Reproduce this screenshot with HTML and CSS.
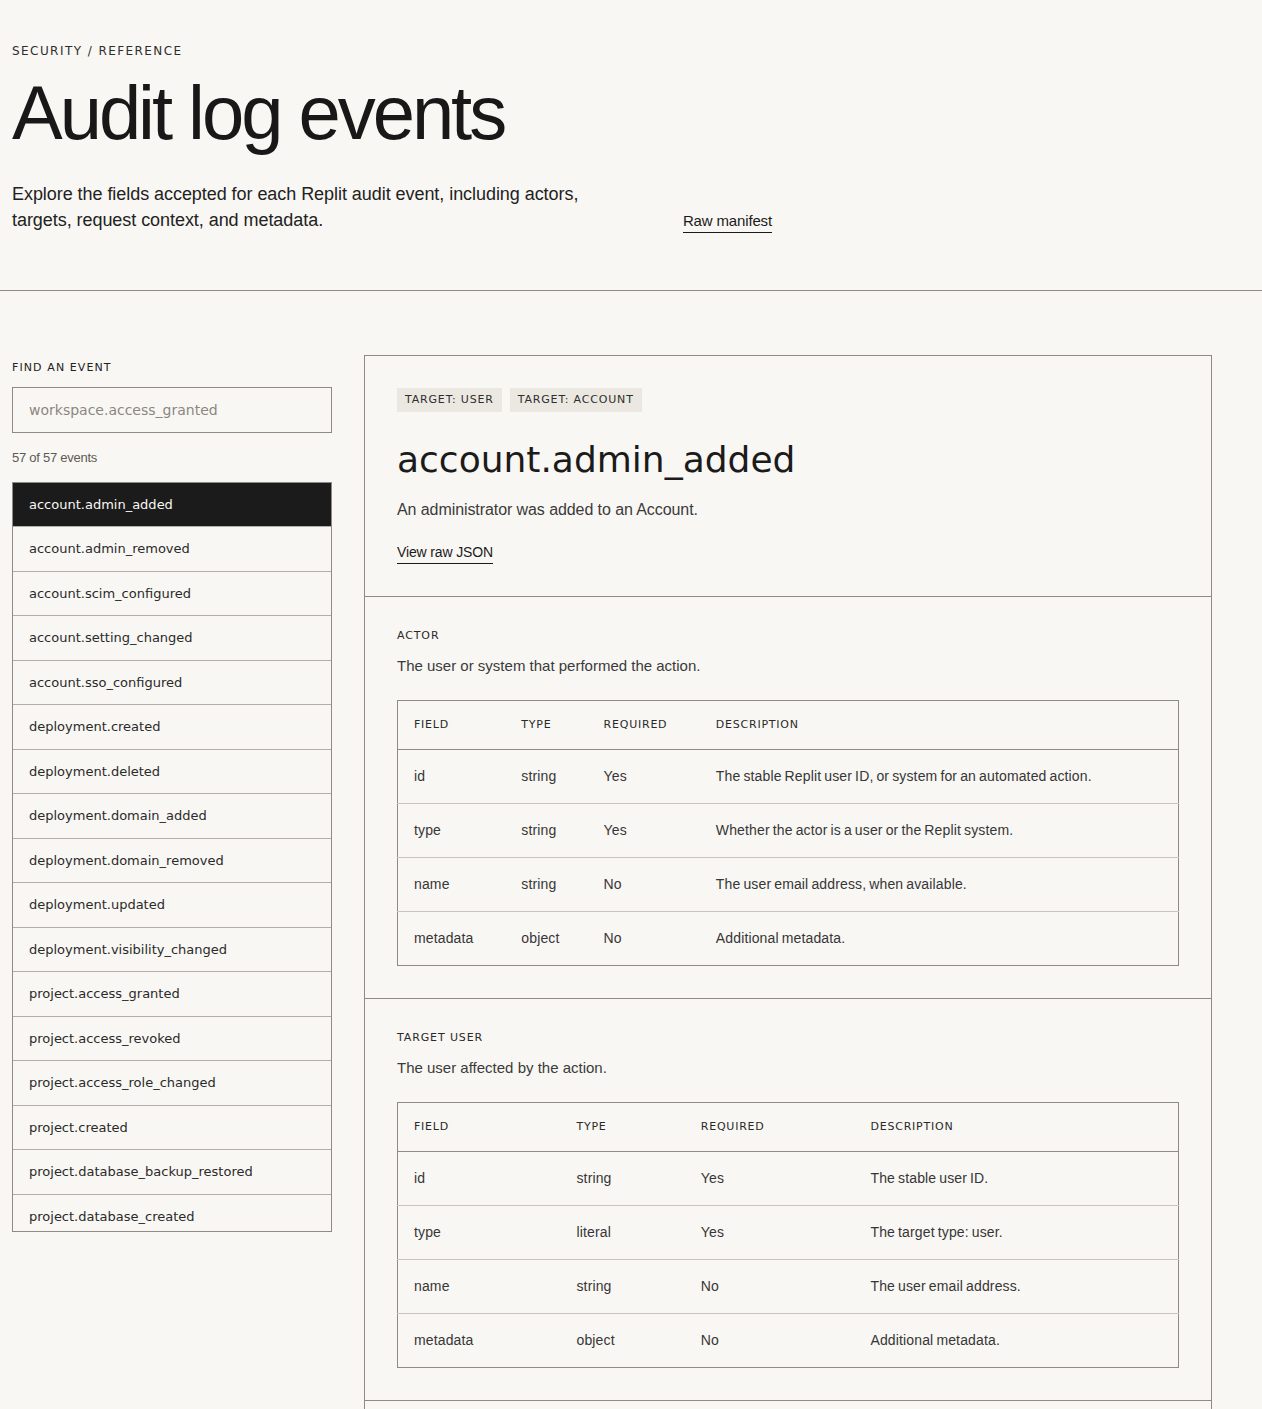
FILE: index.html
```html
<!DOCTYPE html>
<html lang="en">
<head>
<meta charset="utf-8">
<title>Audit log events</title>
<link rel="stylesheet" href="styles.css">
</head>
<body>
<header class="page-head">
  <div class="page-head-inner">
    <p class="eyebrow">Security / Reference</p>
    <h1 class="page-title">Audit log events</h1>
    <div class="intro">
      <p class="intro-text">Explore the fields accepted for each Replit audit event, including actors, targets, request context, and metadata.</p>
      <a class="text-link intro-link" href="#manifest">Raw manifest</a>
    </div>
  </div>
</header>

<main class="layout">
  <aside class="sidebar">
    <label class="field-label" for="event-search">Find an event</label>
    <input class="search" id="event-search" type="text" placeholder="workspace.access_granted">
    <p class="count">57 of 57 events</p>
    <ul class="event-list">
      <li class="event is-active">account.admin_added</li>
      <li class="event">account.admin_removed</li>
      <li class="event">account.scim_configured</li>
      <li class="event">account.setting_changed</li>
      <li class="event">account.sso_configured</li>
      <li class="event">deployment.created</li>
      <li class="event">deployment.deleted</li>
      <li class="event">deployment.domain_added</li>
      <li class="event">deployment.domain_removed</li>
      <li class="event">deployment.updated</li>
      <li class="event">deployment.visibility_changed</li>
      <li class="event">project.access_granted</li>
      <li class="event">project.access_revoked</li>
      <li class="event">project.access_role_changed</li>
      <li class="event">project.created</li>
      <li class="event">project.database_backup_restored</li>
      <li class="event">project.database_created</li>
      <li class="event">project.database_deleted</li>
      <li class="event">project.deleted</li>
      <li class="event">project.exported</li>
      <li class="event">project.forked</li>
      <li class="event">project.imported</li>
      <li class="event">project.renamed</li>
      <li class="event">project.secret_created</li>
      <li class="event">project.secret_deleted</li>
      <li class="event">project.secret_updated</li>
      <li class="event">project.transferred</li>
      <li class="event">project.visibility_changed</li>
      <li class="event">team.created</li>
      <li class="event">team.deleted</li>
      <li class="event">team.member_added</li>
      <li class="event">team.member_removed</li>
      <li class="event">team.member_role_changed</li>
      <li class="event">team.renamed</li>
      <li class="event">user.api_token_created</li>
      <li class="event">user.api_token_revoked</li>
      <li class="event">user.deactivated</li>
      <li class="event">user.invited</li>
      <li class="event">user.login</li>
      <li class="event">user.login_failed</li>
      <li class="event">user.logout</li>
      <li class="event">user.mfa_disabled</li>
      <li class="event">user.mfa_enabled</li>
      <li class="event">user.password_changed</li>
      <li class="event">user.reactivated</li>
      <li class="event">user.role_changed</li>
      <li class="event">user.ssh_key_added</li>
      <li class="event">user.ssh_key_removed</li>
      <li class="event">workspace.access_granted</li>
      <li class="event">workspace.access_revoked</li>
      <li class="event">workspace.billing_updated</li>
      <li class="event">workspace.created</li>
      <li class="event">workspace.deleted</li>
      <li class="event">workspace.invite_sent</li>
      <li class="event">workspace.member_added</li>
      <li class="event">workspace.member_removed</li>
      <li class="event">workspace.setting_changed</li>
    </ul>
  </aside>

  <article class="detail">
    <section class="detail-head">
      <div class="tags">
        <span class="tag">Target: user</span>
        <span class="tag">Target: account</span>
      </div>
      <h2 class="event-name">account.admin_added</h2>
      <p class="event-desc">An administrator was added to an Account.</p>
      <a class="text-link json-link" href="#json">View raw JSON</a>
    </section>

    <section class="block">
      <h3 class="block-label">Actor</h3>
      <p class="block-desc">The user or system that performed the action.</p>
      <table class="fields">
        <thead>
          <tr><th>Field</th><th>Type</th><th>Required</th><th>Description</th></tr>
        </thead>
        <tbody>
          <tr><td>id</td><td>string</td><td>Yes</td><td>The stable Replit user ID, or system for an automated action.</td></tr>
          <tr><td>type</td><td>string</td><td>Yes</td><td>Whether the actor is a user or the Replit system.</td></tr>
          <tr><td>name</td><td>string</td><td>No</td><td>The user email address, when available.</td></tr>
          <tr><td>metadata</td><td>object</td><td>No</td><td>Additional metadata.</td></tr>
        </tbody>
      </table>
    </section>

    <section class="block">
      <h3 class="block-label">Target user</h3>
      <p class="block-desc">The user affected by the action.</p>
      <table class="fields">
        <thead>
          <tr><th>Field</th><th>Type</th><th>Required</th><th>Description</th></tr>
        </thead>
        <tbody>
          <tr><td>id</td><td>string</td><td>Yes</td><td>The stable user ID.</td></tr>
          <tr><td>type</td><td>literal</td><td>Yes</td><td>The target type: user.</td></tr>
          <tr><td>name</td><td>string</td><td>No</td><td>The user email address.</td></tr>
          <tr><td>metadata</td><td>object</td><td>No</td><td>Additional metadata.</td></tr>
        </tbody>
      </table>
    </section>

    <section class="block">
      <h3 class="block-label">Target account</h3>
      <p class="block-desc">The account the administrator was added to.</p>
      <table class="fields">
        <thead>
          <tr><th>Field</th><th>Type</th><th>Required</th><th>Description</th></tr>
        </thead>
        <tbody>
          <tr><td>id</td><td>string</td><td>Yes</td><td>The stable account ID.</td></tr>
          <tr><td>type</td><td>literal</td><td>Yes</td><td>The target type: account.</td></tr>
          <tr><td>name</td><td>string</td><td>No</td><td>The account name.</td></tr>
          <tr><td>metadata</td><td>object</td><td>No</td><td>Additional metadata.</td></tr>
        </tbody>
      </table>
    </section>
  </article>
</main>
</body>
</html>
```

FILE: styles.css
```css
* {
  box-sizing: border-box;
}

html,
body {
  margin: 0;
  padding: 0;
}

body {
  background: #f9f7f3;
  color: #1b1b1b;
  font-family: "Liberation Sans", Arial, sans-serif;
}

p,
h1,
h2,
h3,
ul {
  margin: 0;
  padding: 0;
}

/* ---------- page header ---------- */

.page-head {
  border-bottom: 1px solid #8f8a83;
  padding: 44px 12px 57px;
}

.page-head-inner {
  max-width: 760px;
}

.eyebrow {
  font-family: "DejaVu Sans", sans-serif;
  font-size: 12px;
  line-height: 14px;
  letter-spacing: 0.12em;
  text-transform: uppercase;
  color: #2e2e2e;
  margin-bottom: 17px;
}

.page-title {
  font-weight: 400;
  font-size: 76px;
  line-height: 76px;
  letter-spacing: -0.04em;
  color: #181818;
}

.intro {
  display: flex;
  justify-content: space-between;
  align-items: flex-end;
  margin-top: 30px;
}

.intro-text {
  max-width: 600px;
  font-size: 18px;
  line-height: 26px;
  letter-spacing: -0.003em;
  color: #222;
}

.text-link {
  color: #1b1b1b;
  text-decoration: none;
  border-bottom: 1px solid #1b1b1b;
}

.intro-link {
  font-size: 15px;
  line-height: 18px;
  letter-spacing: -0.01em;
  padding-bottom: 2px;
}

/* ---------- two-column layout ---------- */

.layout {
  display: grid;
  grid-template-columns: 320px 848px;
  column-gap: 32px;
  align-items: start;
  padding: 64px 12px 0;
}

/* ---------- sidebar ---------- */

.sidebar {
  padding-top: 5px;
}

.field-label {
  display: block;
  font-family: "DejaVu Sans", sans-serif;
  font-size: 11px;
  line-height: 16px;
  letter-spacing: 0.1em;
  text-transform: uppercase;
  color: #222;
  margin-bottom: 11px;
}

.search {
  display: block;
  width: 100%;
  height: 46px;
  padding: 0 16px;
  border: 1px solid #8f8a83;
  background: transparent;
  font-family: "DejaVu Sans", sans-serif;
  font-size: 14px;
  color: #1b1b1b;
  outline: none;
}

.search::placeholder {
  color: #8b8781;
}

.count {
  margin-top: 17px;
  font-size: 13px;
  line-height: 16px;
  letter-spacing: -0.02em;
  color: #5d5a56;
}

.event-list {
  list-style: none;
  margin-top: 16px;
  height: 750px;
  overflow-y: auto;
  scrollbar-width: none;
  border: 1px solid #8f8a83;
}

.event-list::-webkit-scrollbar {
  display: none;
}

.event {
  font-family: "DejaVu Sans", sans-serif;
  font-size: 13px;
  line-height: 15.5px;
  padding: 14px 16px;
  border-bottom: 1px solid #b3aea7;
  color: #2a2a2a;
}

.event.is-active {
  padding-top: 13.5px;
  padding-bottom: 14px;
  background: #1b1b1b;
  color: #f9f7f3;
}

/* ---------- detail panel ---------- */

.detail {
  border: 1px solid #8f8a83;
}

.detail-head {
  padding: 32px 32px 32px;
}

.tags {
  display: flex;
  gap: 8px;
}

.tag {
  font-family: "DejaVu Sans", sans-serif;
  font-size: 11px;
  line-height: 14px;
  letter-spacing: 0.075em;
  text-transform: uppercase;
  color: #2e2e2e;
  background: #ebe8e2;
  padding: 5px 8px;
}

.event-name {
  font-family: "DejaVu Sans", sans-serif;
  font-weight: 400;
  font-size: 36px;
  line-height: 45px;
  color: #1b1b1b;
  margin-top: 25px;
}

.event-desc {
  font-size: 16px;
  line-height: 24px;
  letter-spacing: -0.005em;
  color: #3b3b3b;
  margin-top: 16px;
}

.json-link {
  display: inline-block;
  margin-top: 20px;
  font-size: 14px;
  line-height: 20px;
  letter-spacing: -0.01em;
  padding-bottom: 1px;
}

.block {
  border-top: 1px solid #8f8a83;
  padding: 32px;
}

.block-label {
  font-family: "DejaVu Sans", sans-serif;
  font-weight: 400;
  font-size: 11px;
  line-height: 14px;
  letter-spacing: 0.08em;
  text-transform: uppercase;
  color: #2a2a2a;
}

.block-desc {
  font-size: 15px;
  line-height: 22px;
  color: #3b3b3b;
  margin-top: 12px;
}

.fields {
  width: 100%;
  margin-top: 23px;
  border-collapse: collapse;
  border: 1px solid #8f8a83;
}

.fields th {
  font-family: "DejaVu Sans", sans-serif;
  font-weight: 400;
  font-size: 11px;
  line-height: 16px;
  letter-spacing: 0.07em;
  text-transform: uppercase;
  text-align: left;
  color: #2a2a2a;
  padding: 16px;
  border-bottom: 1px solid #8f8a83;
}

.fields td {
  font-size: 14px;
  line-height: 21px;
  letter-spacing: 0.01em;
  word-spacing: -1px;
  color: #363636;
  padding: 16px;
  border-bottom: 1px solid #c9c4bc;
  vertical-align: middle;
}

.fields tbody tr:last-child td {
  border-bottom: none;
}
```
